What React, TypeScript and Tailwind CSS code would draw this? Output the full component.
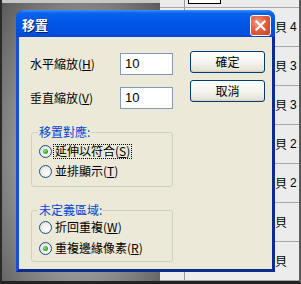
import React from "react";

function Mn({ c }: { c: string }) {
  return (
    <span>
      (<span className="underline underline-offset-1">{c}</span>)
    </span>
  );
}

function Radio({ checked, label, m, focus }: { checked?: boolean; label: string; m: string; focus?: boolean }) {
  return (
    <div className="flex h-[16px] items-center">
      <div className="flex h-[13px] w-[13px] items-center justify-center rounded-full border border-[#1c5180] bg-[radial-gradient(circle_at_60%_60%,#ffffff_0%,#f4f3ee_40%,#d4d3ca_100%)]">
        {checked && <div className="h-[5px] w-[5px] rounded-full bg-[radial-gradient(circle_at_40%_40%,#a9e5a0_0%,#37b12a_50%,#1d8b18_100%)]" />}
      </div>
      <div
        className={
          "ml-[1px] flex h-[15px] items-center px-[1px] leading-none " +
          (focus ? "border border-dotted border-black" : "border border-transparent")
        }
      >
        {label}
        <Mn c={m} />
      </div>
    </div>
  );
}

function Group({ title, children, h, pt }: { title: string; children: React.ReactNode; h: string; pt: string }) {
  return (
    <div className={"relative ml-[1px] w-[142px] rounded-[3px] border border-[#d0d0bf] " + h + " " + pt}>
      <span className="absolute left-[6px] top-[-8px] bg-[#ece9d8] px-[1px] leading-[14px] text-[#0046d5]">{title}</span>
      <div className="flex flex-col">{children}</div>
    </div>
  );
}

function XPButton({ label }: { label: string }) {
  return (
    <div className="flex h-[22px] w-[75px] items-center justify-center rounded-[3px] border border-[#003c74] bg-[linear-gradient(to_bottom,#ffffff_0%,#f5f4ef_50%,#e6e4d8_90%,#d6d0c5_100%)] leading-none text-black shadow-[inset_0_-1px_0_#d6d0c5]">
      {label}
    </div>
  );
}

function Input({ v }: { v: string }) {
  return (
    <div className="flex h-[22px] w-[53px] items-center border border-[#7f9db9] bg-white pl-[4px] font-['Liberation_Sans',sans-serif] text-[13px] text-black">
      {v}
    </div>
  );
}

function Row({ t, n }: { t: string; n: string }) {
  return (
    <div className="flex h-[39px] shrink-0 items-center border-b border-[#a8a8a8]">
      <div className="w-[24px] shrink-0" />
      <div className="h-full w-[91px] shrink-0 border-l border-[#9a9a9a]" />
      <div className="flex items-center gap-[3px] whitespace-nowrap text-[12px] leading-none text-black">
        <span>{t}</span>
        <span className="font-['Liberation_Sans',sans-serif] text-[12px]">{n}</span>
      </div>
    </div>
  );
}

export default function App() {
  const rows = [
    ["貝", "4"],
    ["貝", "3"],
    ["貝", "3"],
    ["貝", "2"],
    ["貝", "2"],
    ["貝", ""],
    ["貝", ""],
  ];
  return (
    <div className="relative h-[284px] w-[301px] overflow-hidden font-['Noto_Sans_CJK_TC','Noto_Sans',sans-serif] text-[12px]">
      {/* background */}
      <div className="flex h-full w-full border-b-[3px] border-l-[2px] border-r-[2px] border-b-[#222222] border-l-[#2a2a2a] border-r-[#5a5a5a]">
        <div className="flex h-full w-[158px] flex-col">
          <div className="h-[3px] bg-[#c8c8c8]" />
          <div className="flex-1 bg-[radial-gradient(ellipse_at_50%_55%,#b8b8b8_0%,#949494_55%,#5a5a5a_100%)]" />
        </div>
        <div className="flex h-full min-w-0 flex-1 flex-col overflow-hidden bg-[#ececec]">
          <div className="flex h-[8px] shrink-0 border-b border-[#a8a8a8]">
            <div className="w-[24px] shrink-0" />
            <div className="h-full border-l border-[#9a9a9a] pl-[3px]">
              <div className="h-[4px] w-[33px] border-x border-b border-black bg-white" />
            </div>
          </div>
          {rows.map((r, i) => (
            <Row key={i} t={r[0]} n={r[1]} />
          ))}
        </div>
      </div>

      {/* dialog window */}
      <div className="absolute left-[16px] top-[10px] flex h-[262px] w-[259px] flex-col overflow-hidden rounded-t-[8px] bg-[#0a3fd0]">
        <div className="flex h-[27px] shrink-0 items-start justify-between bg-[linear-gradient(to_bottom,#3d8ff8_0%,#0a62ec_12%,#0058e8_40%,#0052e0_75%,#0048d2_100%)] pr-[4px] pt-[5px]">
          <span className="pl-[6px] pt-[2px] text-[13px] font-bold leading-[16px] text-white [text-shadow:1px_1px_0_#0a1e6a]">移置</span>
          <div className="flex h-[21px] w-[21px] items-center justify-center rounded-[3px] border border-white bg-[radial-gradient(circle_at_35%_35%,#f0a088_0%,#e2603e_45%,#c8421e_100%)]">
            <svg width="11" height="11" viewBox="0 0 11 11">
              <path d="M1.5 1.5 L9.5 9.5 M9.5 1.5 L1.5 9.5" stroke="white" strokeWidth="2.2" strokeLinecap="square" />
            </svg>
          </div>
        </div>
        <div className="flex flex-1 border-x-[3px] border-b-[3px] border-l-[#1a4ed8] border-r-[#0b2d8d] border-b-[#0b2d8d]">
          <div className="flex flex-1 bg-[#ece9d8] pl-[11px] pt-[14px] text-black">
            <div className="flex w-[143px] flex-col pt-[2px]">
              <div className="flex h-[22px] items-center">
                <span className="w-[90px] leading-none">
                  水平縮放<Mn c="H" />
                </span>
                <Input v="10" />
              </div>
              <div className="mt-[12px] flex h-[22px] items-center">
                <span className="w-[90px] leading-none">
                  垂直縮放<Mn c="V" />
                </span>
                <Input v="10" />
              </div>
              <div className="mt-[23px]">
                <Group title="移置對應:" h="h-[55px]" pt="pt-[10px]">
                  <div className="flex flex-col gap-[4px] pl-[7px]">
                    <Radio checked label="延伸以符合" m="S" focus />
                    <Radio label="並排顯示" m="T" />
                  </div>
                </Group>
              </div>
              <div className="mt-[23px]">
                <Group title="未定義區域:" h="h-[52px]" pt="pt-[8px]">
                  <div className="flex flex-col gap-[5px] pl-[7px]">
                    <Radio label="折回重複" m="W" />
                    <Radio checked label="重複邊緣像素" m="R" />
                  </div>
                </Group>
              </div>
            </div>
            <div className="ml-[17px] flex flex-col gap-[7px]">
              <XPButton label="確定" />
              <XPButton label="取消" />
            </div>
          </div>
        </div>
      </div>
    </div>
  );
}
